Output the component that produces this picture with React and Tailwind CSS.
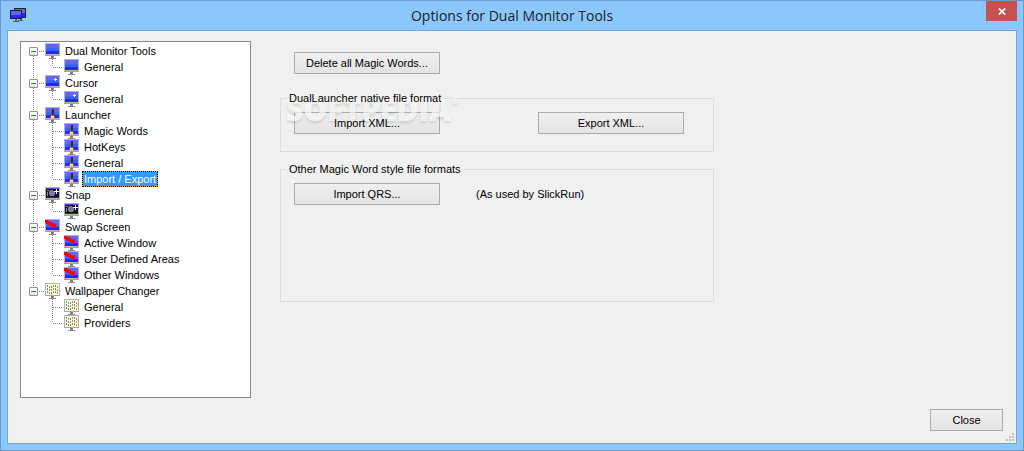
import React, { useState } from "react";

const sections = [
  { name: "Dual Monitor Tools", icon: "monitor", pages: ["General"] },
  { name: "Cursor", icon: "cursor", pages: ["General"] },
  {
    name: "Launcher",
    icon: "launcher",
    pages: ["Magic Words", "HotKeys", "General", "Import / Export"],
  },
  { name: "Snap", icon: "snap", pages: ["General"] },
  {
    name: "Swap Screen",
    icon: "swap",
    pages: ["Active Window", "User Defined Areas", "Other Windows"],
  },
  { name: "Wallpaper Changer", icon: "wallpaper", pages: ["General", "Providers"] },
];

const dotsDown =
  "bg-[repeating-linear-gradient(to_bottom,#808080_0_1px,transparent_1px_2px)]";
const dotsRight =
  "bg-[repeating-linear-gradient(to_right,#808080_0_1px,transparent_1px_2px)]";

// 16x16 monitor, the screen content depends on the section
const MonitorIcon = ({ type }) => (
  <svg
    className="w-4 h-4 shrink-0"
    viewBox="0 0 16 16"
    shapeRendering="crispEdges"
    aria-hidden="true"
  >
    <rect x="0" y="0" width="15" height="13" fill="#b4b4b4" />
    <rect x="0" y="12" width="15" height="1" fill="#a4a4a4" />
    <rect x="6" y="13" width="3" height="2" fill="#808080" />
    <rect x="4" y="15" width="7" height="1" fill="#8c8c8c" />
    {type !== "wallpaper" && type !== "snap" && (
      <>
        <rect x="1" y="1" width="13" height="4" fill="#6464ff" />
        <rect x="1" y="5" width="13" height="3" fill="#3a62ff" />
        <rect x="1" y="8" width="13" height="3" fill="#2626ff" />
      </>
    )}
    {type === "cursor" && (
      <path d="M10 3h1v1h1v1h-1v1h-1v-1h-1v-1h1z" fill="#fff" />
    )}
    {type === "launcher" && (
      <>
        <rect x="7" y="2" width="2" height="6" fill="#303030" />
        <rect x="6" y="3" width="1" height="5" fill="#606068" />
        <path d="M5 9h1v2h-1zM9 9h1v2h-1z" fill="#f03020" />
        <rect x="6" y="8" width="3" height="1" fill="#ff5020" />
        <rect x="6" y="9" width="3" height="2" fill="#ffe8a0" />
      </>
    )}
    {type === "snap" && (
      <>
        <rect x="1" y="1" width="13" height="10" fill="#101030" />
        <rect x="1" y="1" width="13" height="1" fill="#5050d0" />
        <rect x="1" y="10" width="13" height="1" fill="#2020a0" />
        <path d="M2 3h2v1h-2zM2 5h1v4h-1z" fill="#8c8c8c" />
        <path d="M5 3h3v1h1v1h1v3h-1v1h-4v-1h-1v-4h1z" fill="#808080" />
        <path d="M11 2h1v2h2v1h-2v2h-1v-2h-2v-1h2z" fill="#fff" />
      </>
    )}
    {type === "swap" && (
      <path
        d="M0 1h3v1h2v1h2v1h2v1h1v-1h1v5h-5v-1h1v-1h-2v-1h-2v-1h-2v-1h-1z"
        fill="#f00"
      />
    )}
    {type === "wallpaper" && (
      <>
        <rect x="1" y="1" width="13" height="11" fill="#ffffd8" />
        <path d="M2.5 2v9M6.5 3v8M10.5 2v9" stroke="#2a9ae8" strokeDasharray="2 1" />
        <path d="M4.5 3v8M8.5 2v9M12.5 3v8" stroke="#f08020" strokeDasharray="2 1" />
      </>
    )}
  </svg>
);

const AppIcon = () => (
  <svg className="w-4 h-4" viewBox="0 0 16 16" shapeRendering="crispEdges" aria-hidden="true">
    <rect x="4" y="0" width="12" height="10" fill="#202028" />
    <rect x="5" y="1" width="10" height="4" fill="#6464ff" />
    <rect x="5" y="5" width="10" height="4" fill="#2a2aff" />
    <rect x="10" y="10" width="2" height="2" fill="#606060" />
    <rect x="8" y="12" width="5" height="1" fill="#606060" />
    <rect x="0" y="2" width="12" height="9" fill="#202028" />
    <rect x="1" y="3" width="10" height="4" fill="#5a66ff" />
    <rect x="1" y="7" width="10" height="3" fill="#2a2aff" />
    <rect x="5" y="11" width="2" height="2" fill="#606060" />
    <rect x="3" y="13" width="6" height="1" fill="#606060" />
  </svg>
);

const PushButton = ({ children, className = "w-[146px]" }) => (
  <button
    type="button"
    className={`h-[22px] border border-[#acacac] bg-linear-to-b from-[#f0f0f0] to-[#e3e3e3] text-center leading-5 ${className}`}
  >
    <span className="relative z-10">{children}</span>
  </button>
);

const GroupBox = ({ title, className, children }) => (
  <fieldset className={`border border-[#dcdcdc] pl-[13px] pr-[29px] ${className}`}>
    <legend className="relative z-10 -ml-[7px] px-0.5 leading-[13px]">{title}</legend>
    {children}
  </fieldset>
);

const OptionsTree = () => {
  const [selected, setSelected] = useState("Launcher/Import / Export");
  const [closed, setClosed] = useState({});

  return (
    <ul className="w-[231px] shrink-0 border border-[#828790] bg-white pt-px pl-2">
      {sections.map((section, i) => {
        const isFirst = i === 0;
        const isLast = i === sections.length - 1;
        const isClosed = closed[section.name];
        return (
          <li key={section.name}>
            <div className="flex h-4">
              <div className="flex w-[9px] flex-col items-center">
                <span className={`h-1 w-px ${isFirst ? "" : dotsDown}`}></span>
                <button
                  type="button"
                  aria-label={`Toggle ${section.name}`}
                  className="flex h-[9px] w-[9px] items-center justify-center rounded-[1px] border border-[#919191] bg-linear-to-b from-white to-[#e4e4e4]"
                  onClick={() => setClosed({ ...closed, [section.name]: !isClosed })}
                >
                  <span className="h-px w-[5px] bg-[#4b63a7]"></span>
                </button>
                <span className={`h-[3px] w-px ${isLast ? "" : dotsDown}`}></span>
              </div>
              <span className={`mt-2 mr-px ml-px h-px w-[5px] ${dotsRight}`}></span>
              <MonitorIcon type={section.icon} />
              <button
                type="button"
                className="ml-0.5 px-0.5 leading-4"
                onClick={() => setSelected(section.name)}
              >
                {section.name}
              </button>
            </div>

            {!isClosed && (
              <ul>
                {section.pages.map((page, j) => {
                  const id = `${section.name}/${page}`;
                  const isLastPage = j === section.pages.length - 1;
                  return (
                    <li key={id} className="flex h-4">
                      <span className={`mx-1 h-4 w-px ${isLast ? "" : dotsDown}`}></span>
                      <span
                        className={`ml-[14px] w-px ${isLastPage ? "h-2" : "h-4"} ${dotsDown}`}
                      ></span>
                      <span className={`mt-2 mr-px h-px w-[10px] ${dotsRight}`}></span>
                      <MonitorIcon type={section.icon} />
                      <button
                        type="button"
                        className={`ml-0.5 h-4 border border-dotted leading-[14px] ${
                          selected === id
                            ? "border-black bg-[#f09030] text-white"
                            : "border-transparent"
                        }`}
                        onClick={() => setSelected(id)}
                      >
                        <span
                          className={`block h-full px-px ${selected === id ? "bg-[#3399ff]" : ""}`}
                        >
                          {page}
                        </span>
                      </button>
                    </li>
                  );
                })}
              </ul>
            )}
          </li>
        );
      })}
    </ul>
  );
};

const App = () => {
  return (
    <div className="flex min-h-screen flex-col border border-[#6b9ac8] bg-[#8cc7fb] px-1.5 pb-1.5 font-['Liberation_Sans',Arial,sans-serif] text-[11px] text-black">
      {/* Title bar */}
      <header className="grid h-[29px] grid-cols-[1fr_auto_1fr] items-center">
        <div className="pl-[3px]">
          <AppIcon />
        </div>
        <h1 className="font-['Open_Sans','Segoe_UI',sans-serif] text-[14px] leading-5 text-[#222]">
          Options for Dual Monitor Tools
        </h1>
        <button
          type="button"
          aria-label="Close window"
          className="flex h-5 w-[31px] items-center justify-center self-start justify-self-end bg-[#c75050]"
        >
          <svg className="w-2 h-[7px]" viewBox="0 0 8 7" aria-hidden="true">
            <path d="M0.8 0.3L7.2 6.7M7.2 0.3L0.8 6.7" stroke="#fff" strokeWidth="1.7" />
          </svg>
        </button>
      </header>

      {/* Client area */}
      <main className="flex flex-1 flex-col border border-[#73a6d8] bg-[#f0f0f0] pt-2.5 pl-3">
        <div className="flex flex-1">
          <OptionsTree />

          <div className="ml-[29px] w-[434px] pt-[11px]">
            <div className="flex pl-[14px]">
              <PushButton>Delete all Magic Words...</PushButton>
            </div>

            <div className="relative mt-[18px]">
              <GroupBox title="DualLauncher native file format" className="h-[60px]">
                <div className="flex justify-between pt-[7px]">
                  <PushButton>Import XML...</PushButton>
                  <PushButton>Export XML...</PushButton>
                </div>
              </GroupBox>
              {/* Watermark */}
              <div
                aria-hidden="true"
                className="pointer-events-none absolute top-0 left-1.5 flex font-['Open_Sans',sans-serif] text-[30px] leading-9 font-extrabold text-white/70 [text-shadow:0_2px_3px_rgba(0,0,0,0.12)]"
              >
                SOFTPEDIA<span className="text-[10px] leading-4">®</span>
              </div>
            </div>

            <GroupBox title="Other Magic Word style file formats" className="mt-[11px] h-[139px]">
              <div className="flex items-center pt-[7px]">
                <PushButton>Import QRS...</PushButton>
                <p className="ml-9">(As used by SlickRun)</p>
              </div>
            </GroupBox>
          </div>
        </div>

        <footer className="flex justify-end pt-[11px] pr-[13px] pb-3">
          <PushButton className="w-[73px]">Close</PushButton>
        </footer>

        {/* Resize grip */}
        <div className="relative">
          <svg
            className="absolute right-0.5 bottom-0.5 h-2 w-2"
            viewBox="0 0 8 8"
            shapeRendering="crispEdges"
            aria-hidden="true"
          >
            <path
              d="M6 0h2v2h-2zM3 3h2v2h-2zM6 3h2v2h-2zM0 6h2v2h-2zM3 6h2v2h-2zM6 6h2v2h-2z"
              fill="#bfbfbf"
            />
          </svg>
        </div>
      </main>
    </div>
  );
};

export default App;
